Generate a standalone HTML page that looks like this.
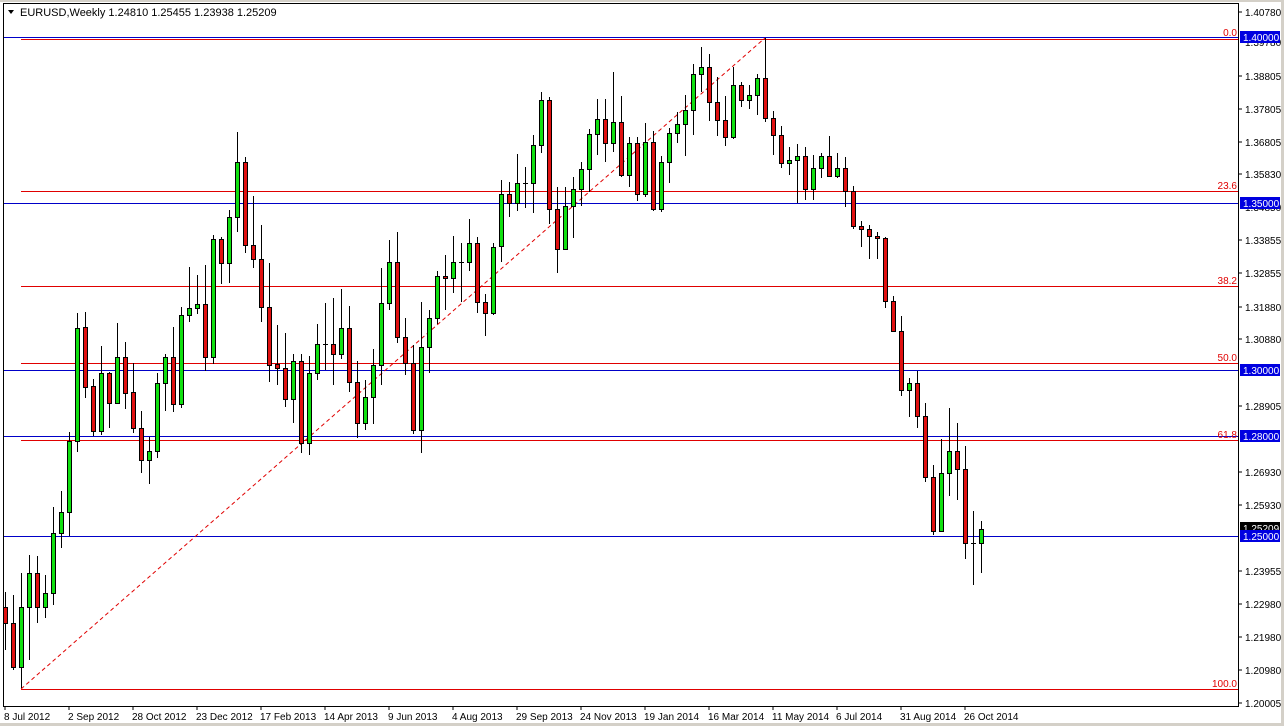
<!DOCTYPE html>
<html><head><meta charset="utf-8"><style>
html,body{margin:0;padding:0;background:#fff;}
body{width:1284px;height:726px;overflow:hidden;position:relative;font-family:"Liberation Sans",sans-serif;}
svg{position:absolute;left:0;top:0;}
</style></head><body>
<svg id="s" width="1284" height="726" xmlns="http://www.w3.org/2000/svg" font-family="Liberation Sans, sans-serif">
<rect x="0" y="0" width="1284" height="726" fill="#ffffff"/>
<rect x="1281" y="0" width="3" height="726" fill="#d4d0c8"/>
<rect x="0" y="723" width="1284" height="3" fill="#d4d0c8"/>
<rect x="0" y="0" width="1284" height="2" fill="#d4d0c8"/>
<rect x="3.5" y="3.5" width="1235" height="703" fill="none" stroke="#000" stroke-width="1" shape-rendering="crispEdges"/>
<g shape-rendering="crispEdges">
<rect x="4" y="37" width="1234" height="1" fill="#0000c8"/>
<rect x="4" y="203" width="1234" height="1" fill="#0000c8"/>
<rect x="4" y="370" width="1234" height="1" fill="#0000c8"/>
<rect x="4" y="436" width="1234" height="1" fill="#0000c8"/>
<rect x="4" y="536" width="1234" height="1" fill="#0000c8"/>
<rect x="21" y="39" width="1217" height="1" fill="#e00000"/>
<rect x="21" y="191" width="1217" height="1" fill="#e00000"/>
<rect x="21" y="286" width="1217" height="1" fill="#e00000"/>
<rect x="21" y="363" width="1217" height="1" fill="#e00000"/>
<rect x="21" y="440" width="1217" height="1" fill="#e00000"/>
<rect x="21" y="689" width="1217" height="1" fill="#e00000"/>
</g>
<line x1="21" y1="689" x2="765" y2="38" stroke="#e00000" stroke-dasharray="4,3"/>
<g fill="#e00000" font-size="10" text-anchor="end">
<text x="1237" y="36">0.0</text>
<text x="1237" y="189">23.6</text>
<text x="1237" y="284">38.2</text>
<text x="1237" y="361">50.0</text>
<text x="1237" y="438">61.8</text>
<text x="1237" y="687">100.0</text>
</g>
<g id="c" shape-rendering="crispEdges"></g>
<g fill="#000" font-size="10">
<text x="1245" y="16">1.40780</text>
<text x="1245" y="46">1.39780</text>
<text x="1245" y="80">1.38805</text>
<text x="1245" y="113">1.37805</text>
<text x="1245" y="146">1.36805</text>
<text x="1245" y="178">1.35830</text>
<text x="1245" y="211">1.34850</text>
<text x="1245" y="244">1.33855</text>
<text x="1245" y="277">1.32855</text>
<text x="1245" y="311">1.31880</text>
<text x="1245" y="343">1.30880</text>
<text x="1245" y="410">1.28905</text>
<text x="1245" y="476">1.26930</text>
<text x="1245" y="509">1.25930</text>
<text x="1245" y="575">1.23955</text>
<text x="1245" y="608">1.22980</text>
<text x="1245" y="641">1.21980</text>
<text x="1245" y="674">1.20980</text>
<text x="1245" y="707">1.20005</text>
</g>
<g stroke="#000" shape-rendering="crispEdges"><line x1="1238" y1="12" x2="1242" y2="12"/><line x1="1238" y1="76" x2="1242" y2="76"/><line x1="1238" y1="109" x2="1242" y2="109"/><line x1="1238" y1="142" x2="1242" y2="142"/><line x1="1238" y1="174" x2="1242" y2="174"/><line x1="1238" y1="240" x2="1242" y2="240"/><line x1="1238" y1="273" x2="1242" y2="273"/><line x1="1238" y1="307" x2="1242" y2="307"/><line x1="1238" y1="339" x2="1242" y2="339"/><line x1="1238" y1="406" x2="1242" y2="406"/><line x1="1238" y1="472" x2="1242" y2="472"/><line x1="1238" y1="505" x2="1242" y2="505"/><line x1="1238" y1="571" x2="1242" y2="571"/><line x1="1238" y1="604" x2="1242" y2="604"/><line x1="1238" y1="637" x2="1242" y2="637"/><line x1="1238" y1="670" x2="1242" y2="670"/><line x1="1238" y1="703" x2="1242" y2="703"/></g>
<rect x="1240" y="522" width="40" height="12" fill="#000"/>
<text x="1243" y="532" fill="#fff" font-size="10">1.25209</text>
<g font-size="10">
<rect x="1240" y="31" width="40" height="12" fill="#0000e0"/><text x="1243" y="41" fill="#fff">1.40000</text>
<rect x="1240" y="197" width="40" height="12" fill="#0000e0"/><text x="1243" y="207" fill="#fff">1.35000</text>
<rect x="1240" y="364" width="40" height="12" fill="#0000e0"/><text x="1243" y="374" fill="#fff">1.30000</text>
<rect x="1240" y="430" width="40" height="12" fill="#0000e0"/><text x="1243" y="440" fill="#fff">1.28000</text>
<rect x="1240" y="530" width="40" height="12" fill="#0000e0"/><text x="1243" y="540" fill="#fff">1.25000</text>
</g>
<g font-size="10" fill="#000">
<text x="4" y="720">8 Jul 2012</text>
<text x="68" y="720">2 Sep 2012</text>
<text x="132" y="720">28 Oct 2012</text>
<text x="196" y="720">23 Dec 2012</text>
<text x="260" y="720">17 Feb 2013</text>
<text x="324" y="720">14 Apr 2013</text>
<text x="388" y="720">9 Jun 2013</text>
<text x="452" y="720">4 Aug 2013</text>
<text x="516" y="720">29 Sep 2013</text>
<text x="580" y="720">24 Nov 2013</text>
<text x="644" y="720">19 Jan 2014</text>
<text x="708" y="720">16 Mar 2014</text>
<text x="772" y="720">11 May 2014</text>
<text x="836" y="720">6 Jul 2014</text>
<text x="900" y="720">31 Aug 2014</text>
<text x="964" y="720">26 Oct 2014</text>
</g>
<g stroke="#000" shape-rendering="crispEdges"><line x1="5" y1="706" x2="5" y2="710"/><line x1="69" y1="706" x2="69" y2="710"/><line x1="133" y1="706" x2="133" y2="710"/><line x1="197" y1="706" x2="197" y2="710"/><line x1="261" y1="706" x2="261" y2="710"/><line x1="325" y1="706" x2="325" y2="710"/><line x1="389" y1="706" x2="389" y2="710"/><line x1="453" y1="706" x2="453" y2="710"/><line x1="517" y1="706" x2="517" y2="710"/><line x1="581" y1="706" x2="581" y2="710"/><line x1="645" y1="706" x2="645" y2="710"/><line x1="709" y1="706" x2="709" y2="710"/><line x1="773" y1="706" x2="773" y2="710"/><line x1="837" y1="706" x2="837" y2="710"/><line x1="901" y1="706" x2="901" y2="710"/><line x1="965" y1="706" x2="965" y2="710"/></g>
<polygon points="8,10 14,10 11,14" fill="#000"/>
<text x="20" y="16" font-size="11" fill="#000">EURUSD,Weekly  1.24810 1.25455 1.23938 1.25209</text>
</svg>
<script>
var d=[
"r 607 623 592 650","r 623 667 595 670","g 607 667 573 688","g 573 607 555 660","r 573 607 556 623","g 593 607 575 618","g 533 593 507 605","g 512 533 491 548","g 441 512 432 536","g 328 441 313 452",
"r 327 387 312 398","r 386 431 379 436","g 373 431 346 435","r 373 403 372 428","g 357 403 323 404","r 357 393 342 409","r 392 428 363 433","r 428 460 411 473","g 451 460 437 484","g 383 451 373 458",
"g 357 383 354 411","r 357 404 327 412","g 315 404 307 408","g 308 315 267 322","g 304 308 275 314","r 304 357 265 371","g 239 357 235 364","r 239 263 237 284","g 217 263 210 283","g 162 217 132 232",
"r 162 245 157 253","r 245 259 196 268","r 259 307 225 322","r 307 365 263 382","r 364 368 325 385","r 368 399 333 407","g 361 399 354 423","r 361 443 354 453","g 373 443 356 455","g 344 373 324 380",
"d 344 344 303 370","r 344 354 298 385","g 328 354 289 359","r 328 382 306 392","r 382 423 361 438","g 397 423 380 430","g 365 397 349 424","g 303 365 268 385","g 262 303 240 310","r 262 337 232 343",
"r 337 363 318 375","r 363 430 345 434","g 347 430 302 453","g 318 347 310 373","g 276 318 271 324","r 276 278 255 310","g 262 278 236 293","d 262 262 243 302","g 243 262 219 271","r 243 302 237 313",
"r 302 313 294 336","g 247 313 243 315","g 194 246 180 262","r 194 203 182 217","g 183 203 154 211","d 183 183 167 208","g 145 183 135 213","g 100 145 92 153","r 100 209 97 224","r 209 249 187 273",
"g 206 249 187 250","g 189 206 177 238","g 169 189 162 206","g 134 169 129 192","g 119 134 99 155","r 119 143 99 162","g 122 143 72 152","r 122 175 96 177","g 143 175 137 187","r 143 194 137 201",
"g 142 194 123 197","r 142 209 131 211","g 162 209 156 212","g 133 162 128 183","g 124 133 112 143","g 110 124 95 156","g 74 110 64 135","g 67 74 47 92","r 67 102 54 121","r 102 120 77 136",
"r 120 137 96 146","g 85 137 67 139","r 85 100 82 107","g 95 100 85 109","g 78 95 74 115","r 78 118 38 122","r 118 135 111 155","r 135 163 126 168","g 160 163 147 175","g 156 160 144 203",
"r 156 189 147 200","g 168 189 155 200","g 156 168 153 178","r 156 176 136 177","g 168 176 153 178","r 168 191 157 207","r 191 226 186 229","r 226 229 221 247","r 229 236 225 259","r 236 238 232 259",
"r 238 301 237 308","r 301 331 296 331","r 331 390 316 396","g 383 390 378 417","r 383 416 371 428","r 416 477 403 482","r 477 531 465 535","g 473 531 439 532","g 451 473 408 496","r 451 469 423 500",
"r 469 543 446 559","d 543 543 511 585","g 529 543 521 573"];
var g=document.getElementById('c'),h="";
for(var i=0;i<d.length;i++){var p=d[i].split(' '),x=5+8*i,t=+p[1],b=+p[2],hi=+p[3],lo=+p[4];
h+='<line x1="'+(x+0.5)+'" y1="'+hi+'" x2="'+(x+0.5)+'" y2="'+lo+'" stroke="#000"/>';
if(p[0]=='d'){h+='<line x1="'+(x-2)+'" y1="'+(t+0.5)+'" x2="'+(x+3)+'" y2="'+(t+0.5)+'" stroke="#000"/>';}
else{h+='<rect x="'+(x-1.5)+'" y="'+(t+0.5)+'" width="4" height="'+Math.max(1,b-t)+'" fill="'+(p[0]=='g'?'#10e010':'#e01010')+'" stroke="#000" stroke-width="1"/>';}}
g.innerHTML=h;
</script>
</body></html>
